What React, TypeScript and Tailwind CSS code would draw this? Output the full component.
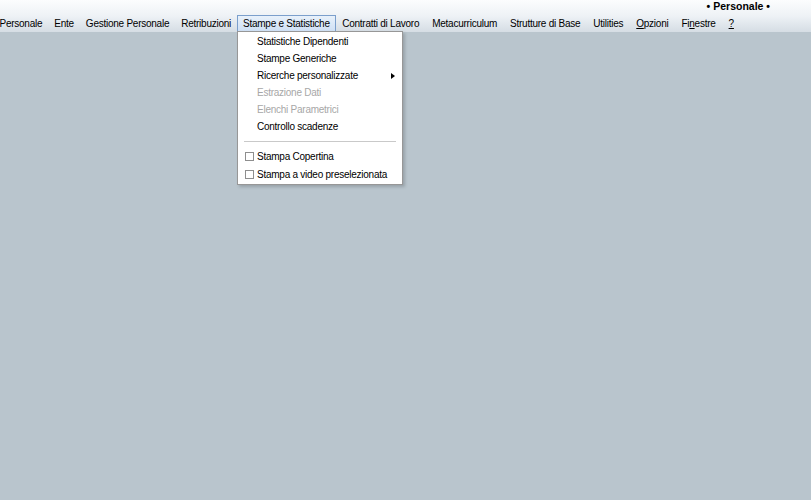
import React from "react"

type MenuItem = { label: React.ReactNode; active?: boolean }

const menu: MenuItem[] = [
  { label: "Personale" },
  { label: "Ente" },
  { label: "Gestione Personale" },
  { label: "Retribuzioni" },
  { label: "Stampe e Statistiche", active: true },
  { label: "Contratti di Lavoro" },
  { label: "Metacurriculum" },
  { label: "Strutture di Base" },
  { label: "Utilities" },
  { label: <><u>O</u>pzioni</> },
  { label: <>Fi<u>n</u>estre</> },
  { label: <u>?</u> },
]

const entries = [
  { label: "Statistiche Dipendenti" },
  { label: "Stampe Generiche" },
  { label: "Ricerche personalizzate", submenu: true },
  { label: "Estrazione Dati", disabled: true },
  { label: "Elenchi Parametrici", disabled: true },
  { label: "Controllo scadenze" },
]

const checks = ["Stampa Copertina", "Stampa a video preselezionata"]

function Dropdown() {
  return (
    <div className="absolute left-[237px] top-[31px] w-[166px] bg-white border border-[#979797] pt-px pb-px shadow-[2px_2px_3px_rgba(0,0,0,0.18)]">
      {entries.map((e, i) => (
        <div key={i} className="h-[17px] flex items-center justify-between pl-[19px] pr-[7px]">
          <span className={e.disabled ? "text-[#a7a7a7]" : "text-black"}>{e.label}</span>
          {e.submenu && (
            <span className="w-0 h-0 border-y-[3.5px] border-y-transparent border-l-[4px] border-l-black" />
          )}
        </div>
      ))}
      <div className="h-[12px] flex items-center px-[6px]">
        <div className="h-px w-full bg-[#c9c9c9]" />
      </div>
      {checks.map((c) => (
        <div key={c} className="h-[18px] flex items-center pl-[7px]">
          <span className="w-[9px] h-[9px] border border-[#8e8e8e] bg-white mr-[3px]" />
          <span>{c}</span>
        </div>
      ))}
    </div>
  )
}

export default function App() {
  return (
    <div className="relative w-[811px] h-[500px] overflow-hidden bg-[#b9c5cd] text-[10px] tracking-[-0.25px] text-black font-['Liberation_Sans',Arial,sans-serif]">
      <div className="h-[32px] bg-gradient-to-b from-[#fcfdfe] via-[#eef2f6] to-[#d5dde4]">
        <div className="h-[14px] flex justify-end pr-[41px] text-[10.5px] font-bold leading-[13px] tracking-normal">
          • Personale •
        </div>
        <div className="h-[18px] flex ml-[-6.5px] pt-px">
          {menu.map((m, i) => (
            <div
              key={i}
              className={
                m.active
                  ? "flex items-center px-[5px] border border-[#7b9fcc] bg-gradient-to-b from-[#e8f1fb] to-[#cfe0f4] whitespace-nowrap"
                  : i > 4
                    ? "flex items-center px-[5.5px] border border-transparent whitespace-nowrap"
                    : "flex items-center px-[5px] border border-transparent whitespace-nowrap"
              }
            >
              {m.label}
            </div>
          ))}
        </div>
      </div>
      <Dropdown />
    </div>
  )
}
